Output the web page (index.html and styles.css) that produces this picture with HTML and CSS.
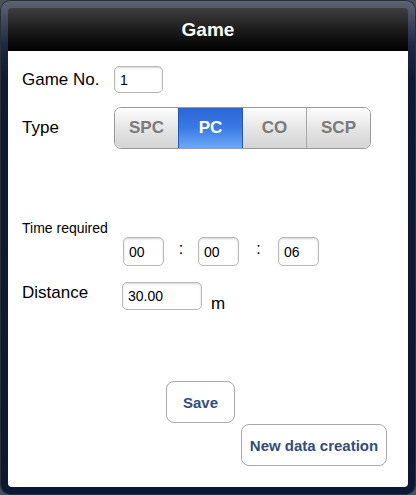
FILE: index.html
```html
<!DOCTYPE html>
<html lang="en">
<head>
    <meta charset="utf-8">
    <meta name="viewport" content="width=device-width, initial-scale=1.0">
    <title>Game</title>
    <link rel="stylesheet" href="styles.css">
</head>
<body>
    <div class="popover">
        <div class="header">Game</div>
        <div class="content">
            <div class="row row-game">
                <span class="label">Game No.</span>
                <input class="field field-no" type="text" value="1">
            </div>

            <div class="row row-type">
                <span class="label">Type</span>
                <div class="segmented">
                    <span class="seg">SPC</span>
                    <span class="seg active">PC</span>
                    <span class="seg">CO</span>
                    <span class="seg">SCP</span>
                </div>
            </div>

            <div class="time-label">Time required</div>
            <div class="time-row">
                <input class="field field-time" type="text" value="00">
                <span class="colon">:</span>
                <input class="field field-time" type="text" value="00">
                <span class="colon colon-wide">:</span>
                <input class="field field-time" type="text" value="06">
            </div>

            <div class="row row-distance">
                <span class="label">Distance</span>
                <input class="field field-distance" type="text" value="30.00">
                <span class="unit">m</span>
            </div>

            <div class="actions">
                <button class="btn btn-save">Save</button>
                <button class="btn btn-new">New data creation</button>
            </div>
        </div>
    </div>
</body>
</html>
```

FILE: styles.css
```css
html, body {
    margin: 0;
    height: 100%;
}

body {
    font-family: "Liberation Sans", Arial, sans-serif;
    background: #4a505c;
}

.popover {
    margin: 1px 1px 0 1px;
    height: 493px;
    box-sizing: border-box;
    padding: 7px;
    border-radius: 9px;
    background: linear-gradient(#5d6472 0px, #1b2744 45px, #0d1a36 80px, #0c1833 100%);
    box-shadow: 0 0 0 1px #2a2f3a;
    display: flex;
    flex-direction: column;
}

.header {
    height: 43px;
    border-radius: 4px 4px 0 0;
    background: linear-gradient(#3e3e3e, #1a1a1a 55%, #000);
    color: #fff;
    font-size: 19px;
    font-weight: bold;
    text-align: center;
    line-height: 43px;
}

.content {
    flex: 1;
    background: #fff;
    border-radius: 0 0 4px 4px;
    padding: 0 14px;
}

.row {
    display: flex;
    align-items: center;
}

.label {
    width: 92px;
    font-size: 17px;
    color: #000;
}

.field {
    box-sizing: border-box;
    border: 1px solid #b8b8b8;
    border-radius: 5px;
    box-shadow: inset 0 1px 2px rgba(0, 0, 0, 0.18);
    font-family: "Liberation Sans", Arial, sans-serif;
    font-size: 14px;
    color: #000;
    padding: 0 5px;
    background: #fff;
    outline: none;
}

.row-game {
    margin-top: 15px;
}

.field-no {
    width: 49px;
    height: 27px;
}

.row-type {
    margin-top: 14px;
}

.segmented {
    display: flex;
    width: 257px;
    height: 42px;
    border: 1px solid #9a9a9a;
    border-radius: 7px;
    overflow: hidden;
    box-sizing: border-box;
}

.seg {
    flex: 1;
    display: flex;
    align-items: center;
    justify-content: center;
    font-size: 17px;
    font-weight: bold;
    color: #7a7a7a;
    background: linear-gradient(#fdfdfd, #e6e6e6 50%, #d4d4d4);
    border-left: 1px solid #a8a8a8;
}

.seg:first-child {
    border-left: none;
}

.seg.active {
    color: #fff;
    background: linear-gradient(#2a66d6, #3a7ae6 50%, #6eaaf7);
    border-left: 1px solid #2458b8;
}

.seg.active + .seg {
    border-left: 1px solid #2458b8;
}

.time-label {
    margin-top: 71px;
    font-size: 14px;
    line-height: 16px;
}

.time-row {
    display: flex;
    align-items: center;
    margin-top: 1px;
    padding-left: 101px;
}

.field-time {
    width: 41px;
    height: 29px;
}

.colon {
    width: 34px;
    text-align: center;
    font-size: 16px;
    margin-top: -6px;
}

.colon-wide {
    width: 39px;
}

.row-distance {
    margin-top: 16px;
    align-items: flex-start;
}

.row-distance .label {
    width: 100px;
    margin-top: 1px;
}

.field-distance {
    width: 80px;
    height: 28px;
}

.unit {
    font-size: 17px;
    margin-left: 9px;
    margin-top: 12px;
}

.actions {
    margin-top: 67px;
    display: flex;
    flex-direction: column;
}

.btn {
    box-sizing: border-box;
    height: 42px;
    border: 1px solid #a8a8a8;
    border-radius: 8px;
    background: #fff;
    font-family: "Liberation Sans", Arial, sans-serif;
    font-size: 15px;
    font-weight: bold;
    color: #304d7e;
    padding: 0;
}

.btn-save {
    width: 69px;
    margin-left: 144px;
}

.btn-new {
    width: 146px;
    margin-left: 219px;
    margin-top: 1px;
}
```
